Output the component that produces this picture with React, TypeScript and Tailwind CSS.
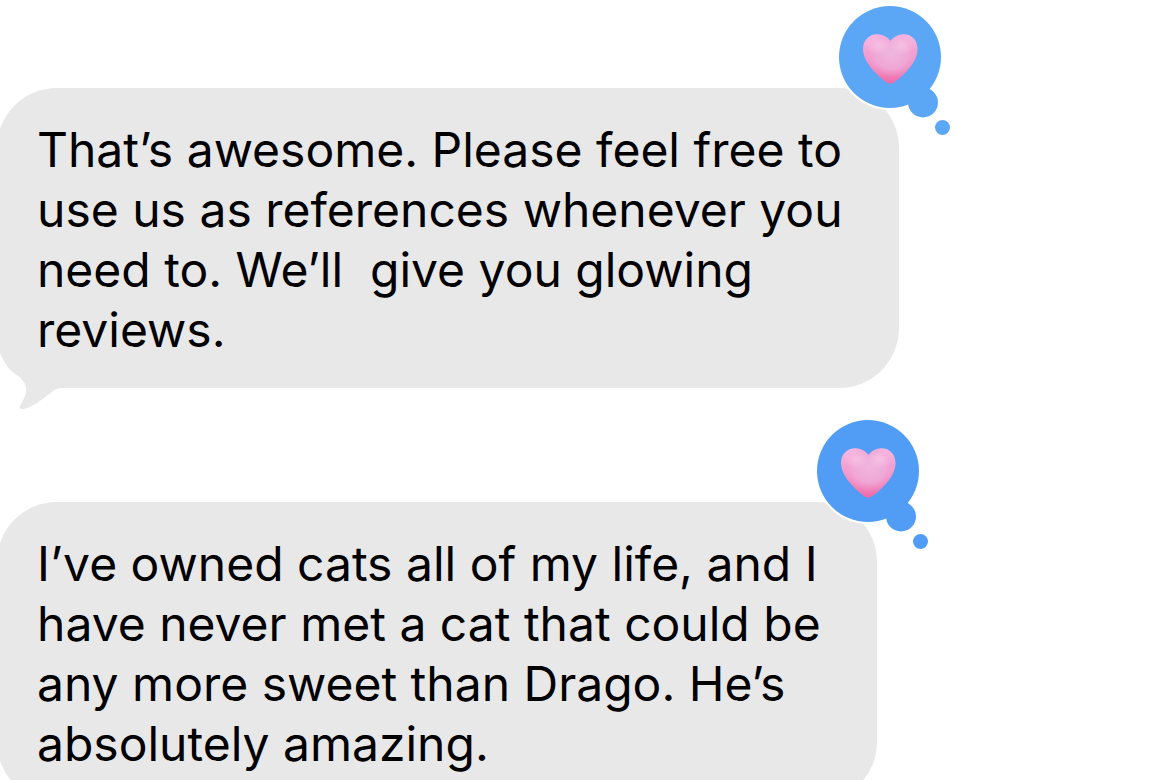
import { clsx } from "clsx";

type Message = {
  id: string;
  text: string;
  hasTail: boolean;
  reactionColor: string;
};

const messages: Message[] = [
  {
    id: "m1",
    text: "That’s awesome. Please feel free to\nuse us as references whenever you\nneed to. We’ll  give you glowing\nreviews.",
    hasTail: true,
    reactionColor: "#5ba7f5",
  },
  {
    id: "m2",
    text: "I’ve owned cats all of my life, and I\nhave never met a cat that could be\nany more sweet than Drago. He’s\nabsolutely amazing.",
    hasTail: false,
    reactionColor: "#519df6",
  },
];

function HeartReaction({ id, color }: { id: string; color: string }) {
  const heart =
    "M53.5 37 C57 32.5 61.5 30.3 66.5 30.3 C75 30.3 80.5 36.5 80.5 45 C80.5 56 71 68 57.5 78 C54.5 80 52 80 49 78 C36 68 26 56 26 45 C26 36.5 31.8 30.3 40.3 30.3 C45.5 30.3 50 32.5 53.5 37 Z";

  return (
    <svg
      role="img"
      aria-label="Heart reaction"
      viewBox="0 0 115 133"
      className="absolute -top-[84px] -right-[53px] w-[115px] h-[133px]"
    >
      <defs>
        <linearGradient id={`${id}-base`} x1="0" y1="0" x2="0" y2="1">
          <stop offset="0" stopColor="#f5b9e4" />
          <stop offset="0.5" stopColor="#f29bcd" />
          <stop offset="1" stopColor="#f06ba8" />
        </linearGradient>
        <radialGradient id={`${id}-glow`} cx="0.52" cy="0.4" r="0.5">
          <stop offset="0" stopColor="#efb6de" />
          <stop offset="0.6" stopColor="#efa9d8" stopOpacity="0.9" />
          <stop offset="1" stopColor="#f394c8" stopOpacity="0" />
        </radialGradient>
        <radialGradient id={`${id}-shine`}>
          <stop offset="0" stopColor="#fbd0ea" stopOpacity="0.6" />
          <stop offset="1" stopColor="#fbd0ea" stopOpacity="0" />
        </radialGradient>
      </defs>
      <circle cx="53" cy="53" r="53" fill="#ffffff" />
      <circle cx="53" cy="53" r="51" fill={color} />
      <circle cx="86" cy="98.5" r="15" fill={color} />
      <circle cx="105.5" cy="123.5" r="7.5" fill={color} />
      <path d={heart} fill={`url(#${id}-base)`} />
      <path d={heart} fill={`url(#${id}-glow)`} />
      <ellipse cx="41" cy="41" rx="13" ry="10" fill={`url(#${id}-shine)`} />
      <ellipse cx="65" cy="41" rx="13" ry="10" fill={`url(#${id}-shine)`} />
    </svg>
  );
}

function BubbleTail() {
  return (
    <svg
      aria-hidden="true"
      viewBox="0 -10 64 70"
      className="absolute left-[3px] -bottom-[22px] w-16 h-[70px] fill-[#e8e8e8]"
    >
      <path d="M0 -10 L0 3 C4 13 10 21 18 26 C24 30 27 36 26 42 C25 48 22 52 20 56 C19 58 21 60 24 59 C34 56 44 48 52 42 C55 39 58 38 64 38 L64 -10 Z" />
    </svg>
  );
}

function MessageBubble({ message }: { message: Message }) {
  return (
    <div
      className={clsx(
        "relative w-fit rounded-[60px] bg-[#e8e8e8] pt-8 pb-7 pl-10 pr-14",
        "whitespace-pre text-5xl leading-[60px] text-black"
      )}
    >
      {message.hasTail && <BubbleTail />}
      <p className="relative">{message.text}</p>
      <HeartReaction id={message.id} color={message.reactionColor} />
    </div>
  );
}

export default function App() {
  return (
    <main className="h-screen overflow-hidden bg-white font-['Inter',sans-serif]">
      {/* Incoming messages sit slightly past the left edge */}
      <div className="-ml-[3px] flex flex-col gap-[114px] pt-[88px]">
        {messages.map((message) => (
          <MessageBubble key={message.id} message={message} />
        ))}
      </div>
    </main>
  );
}
